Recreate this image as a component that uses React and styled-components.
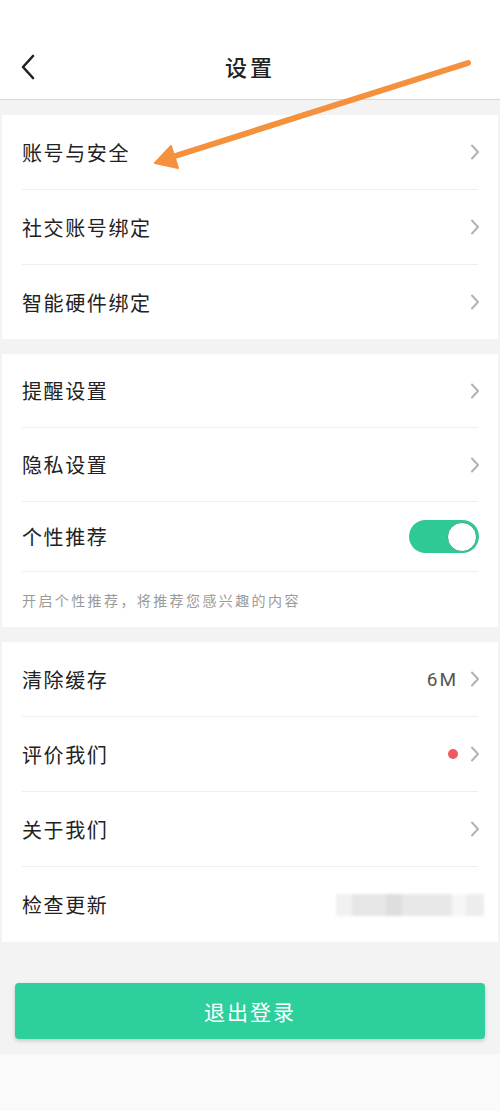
import React from "react";
import styled, { createGlobalStyle } from "styled-components";

const GlobalStyle = createGlobalStyle`
  html, body {
    margin: 0;
    padding: 0;
    background: #fafafa;
  }
  * {
    box-sizing: border-box;
  }
  body {
    font-family: "Noto Sans CJK SC", "Noto Sans", sans-serif;
  }
`;

const Page = styled.div`
  position: relative;
  width: 500px;
  min-height: 1111px;
  background: #fafafa;
`;

const StatusBar = styled.div`
  height: 35px;
  background: #fff;
`;

const Header = styled.header`
  height: 65px;
  background: #fff;
  border-bottom: 1px solid #d9d9d9;
  display: flex;
  align-items: center;
  justify-content: center;
  position: relative;
  padding-bottom: 3px;
`;

const BackButton = styled.button`
  position: absolute;
  left: 16px;
  top: 17px;
  border: none;
  background: none;
  padding: 0;
  width: 24px;
  height: 30px;
  display: flex;
  align-items: center;
  justify-content: center;
`;

const Title = styled.h1`
  margin: 0;
  font-size: 22px;
  font-weight: 500;
  color: #222;
  letter-spacing: 3px;
`;

const Content = styled.main`
  background: #f3f3f3;
  padding: 15px 2px 0;
  display: flex;
  flex-direction: column;
  gap: 15px;
`;

const Section = styled.section`
  background: #fff;
  padding: 0 20px;
`;

const Row = styled.div`
  height: ${(p) => p.$h || 75}px;
  display: flex;
  align-items: center;
  justify-content: space-between;
  border-bottom: ${(p) => (p.$last ? "none" : "1px solid #efefef")};
`;

const Label = styled.span`
  font-size: 20px;
  color: #222;
  letter-spacing: 1.6px;
`;

const Right = styled.div`
  display: flex;
  align-items: center;
  gap: 12px;
  margin-right: -2px;
`;

const Value = styled.span`
  font-family: "Roboto", "Liberation Sans", sans-serif;
  font-size: 19px;
  color: #555;
  letter-spacing: 2px;
`;

const Dot = styled.span`
  width: 10px;
  height: 10px;
  border-radius: 50%;
  background: #f05a5e;
`;

const Note = styled.p`
  margin: 0;
  height: 55px;
  display: flex;
  align-items: center;
  font-size: 14px;
  color: #9a9a9a;
  letter-spacing: 2.4px;
`;

const Toggle = styled.div`
  width: 70px;
  height: 33px;
  border-radius: 17px;
  background: #2fc995;
  display: flex;
  align-items: center;
  justify-content: flex-end;
  padding-right: 2px;
  margin-right: -1px;
`;

const Knob = styled.div`
  width: 30px;
  height: 30px;
  border-radius: 50%;
  background: #fff;
  border: 1px solid #3aa982;
`;

const Blurred = styled.div`
  width: 148px;
  height: 22px;
  display: flex;
  filter: blur(1.5px);
  margin-right: -4px;
`;

const Block = styled.div`
  flex: ${(p) => p.$w};
  background: ${(p) => p.$c};
`;

const Footer = styled.div`
  background: #f3f3f3;
  padding: 41px 15px 15px;
`;

const Logout = styled.button`
  width: 100%;
  height: 56px;
  border: none;
  border-radius: 4px;
  background: #2dcf9c;
  color: #fff;
  font-family: "Noto Sans CJK SC", sans-serif;
  font-size: 21px;
  letter-spacing: 2px;
  box-shadow: 0 2px 4px rgba(0, 0, 0, 0.18);
`;

const Arrow = styled.svg`
  position: absolute;
  left: 0;
  top: 0;
  pointer-events: none;
`;

function Chevron() {
  return (
    <svg width="10" height="16" viewBox="0 0 10 16">
      <path d="M2 1.5 L8 8 L2 14.5" fill="none" stroke="#b3b3b3" strokeWidth="2" strokeLinecap="round" strokeLinejoin="round" />
    </svg>
  );
}

function Item({ label, last, h, children }) {
  return (
    <Row $last={last} $h={h}>
      <Label>{label}</Label>
      <Right>{children}</Right>
    </Row>
  );
}

export default function App() {
  return (
    <Page>
      <GlobalStyle />
      <StatusBar />
      <Header>
        <BackButton>
          <svg width="16" height="26" viewBox="0 0 16 26">
            <path d="M13 2 L3 13 L13 24" fill="none" stroke="#222" strokeWidth="2.6" strokeLinecap="round" strokeLinejoin="round" />
          </svg>
        </BackButton>
        <Title>设置</Title>
      </Header>
      <Content>
        <Section>
          <Item label="账号与安全"><Chevron /></Item>
          <Item label="社交账号绑定"><Chevron /></Item>
          <Item label="智能硬件绑定" h={74} last><Chevron /></Item>
        </Section>
        <Section>
          <Item label="提醒设置" h={74}><Chevron /></Item>
          <Item label="隐私设置" h={74}><Chevron /></Item>
          <Row $h={70}>
            <Label>个性推荐</Label>
            <Toggle>
              <Knob />
            </Toggle>
          </Row>
          <Note>开启个性推荐，将推荐您感兴趣的内容</Note>
        </Section>
        <Section>
          <Item label="清除缓存">
            <Value>6M</Value>
            <Chevron />
          </Item>
          <Item label="评价我们">
            <Dot />
            <Chevron />
          </Item>
          <Item label="关于我们"><Chevron /></Item>
          <Item label="检查更新" last>
            <Blurred>
              <Block $w={16} $c="#f1f1f1" />
              <Block $w={34} $c="#e6e6e6" />
              <Block $w={16} $c="#dedede" />
              <Block $w={50} $c="#e8e8e8" />
              <Block $w={14} $c="#f6f6f6" />
              <Block $w={18} $c="#ededed" />
            </Blurred>
          </Item>
        </Section>
      </Content>
      <Footer>
        <Logout>退出登录</Logout>
      </Footer>
      <Arrow width="500" height="200" viewBox="0 0 500 200">
        <line x1="468" y1="63" x2="172" y2="157" stroke="#f5903c" strokeWidth="6" strokeLinecap="round" />
        <polygon points="155,163 171,146 178,168" fill="#f5903c" stroke="#f5903c" strokeWidth="2" strokeLinejoin="round" />
      </Arrow>
    </Page>
  );
}
